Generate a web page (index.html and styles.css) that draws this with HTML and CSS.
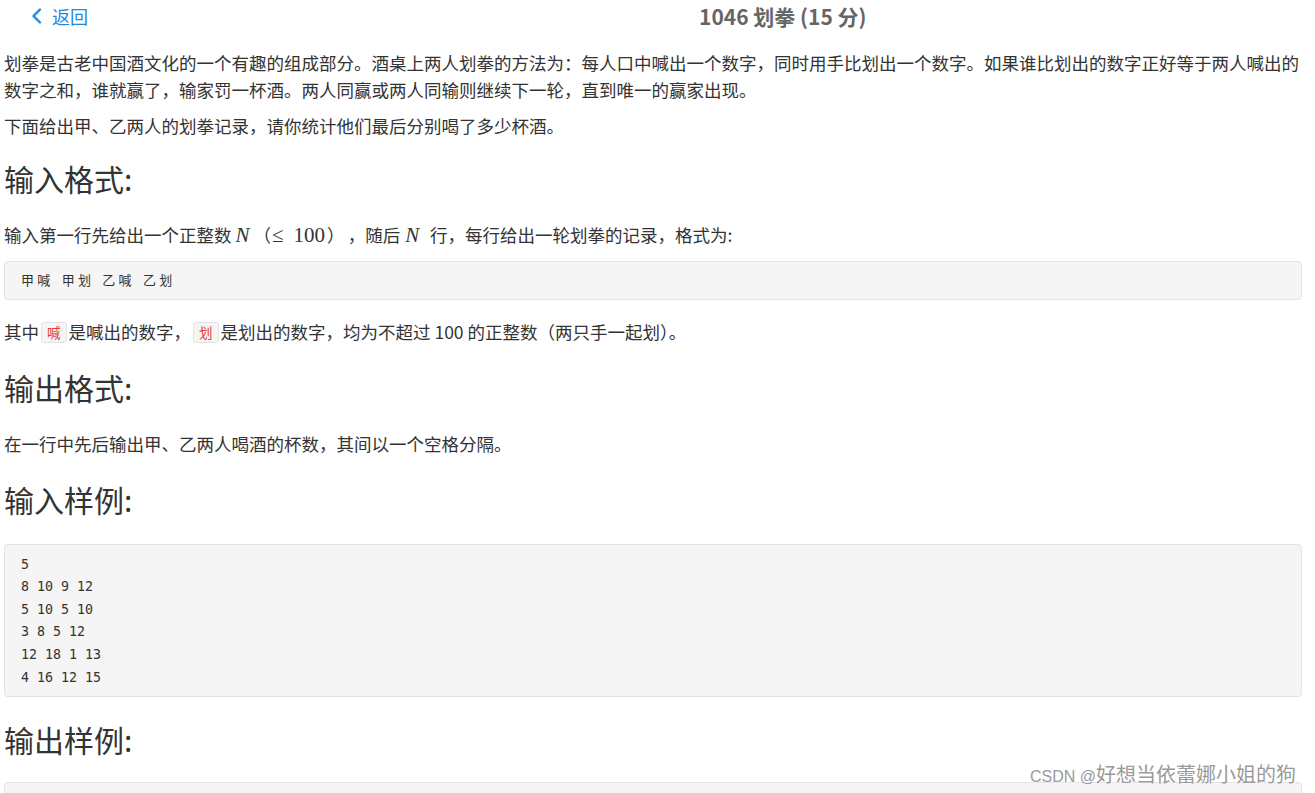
FILE: index.html
```html
<!DOCTYPE html>
<html lang="zh-CN">
<head>
<meta charset="utf-8">
<title>1046 划拳</title>
<link rel="stylesheet" href="styles.css">
</head>
<body>
<header class="topbar">
  <a class="back" href="#">
    <svg class="chev" width="12" height="16" viewBox="0 0 12 16"><path d="M9 1.5 L2.5 8 L9 14.5" fill="none" stroke="#1e88e5" stroke-width="2.4" stroke-linecap="round" stroke-linejoin="round"/></svg>
    <span>返回</span>
  </a>
  <h1 class="title">1046 划拳 (15 分)</h1>
</header>
<main class="content">
  <p>划拳是古老中国酒文化的一个有趣的组成部分。酒桌上两人划拳的方法为：每人口中喊出一个数字，同时用手比划出一个数字。如果谁比划出的数字正好等于两人喊出的数字之和，谁就赢了，输家罚一杯酒。两人同赢或两人同输则继续下一轮，直到唯一的赢家出现。</p>
  <p>下面给出甲、乙两人的划拳记录，请你统计他们最后分别喝了多少杯酒。</p>
  <h2 class="sec first">输入格式:</h2>
  <p>输入第一行先给出一个正整数 <span class="math n1"><i>N</i></span><span class="paren po">（</span><span class="math"><span class="rel">≤</span>100</span><span class="paren pc">）</span>，随后 <span class="math n2"><i>N</i></span> 行，每行给出一轮划拳的记录，格式为:</p>
  <pre class="code"><span class="cjk">甲喊</span> <span class="cjk">甲划</span> <span class="cjk">乙喊</span> <span class="cjk">乙划</span></pre>
  <p>其中<code class="ic">喊</code>是喊出的数字，<code class="ic">划</code>是划出的数字，均为不超过 100 的正整数（两只手一起划）。</p>
  <h2 class="sec">输出格式:</h2>
  <p>在一行中先后输出甲、乙两人喝酒的杯数，其间以一个空格分隔。</p>
  <h2 class="sec">输入样例:</h2>
  <pre class="code sample">5
8 10 9 12
5 10 5 10
3 8 5 12
12 18 1 13
4 16 12 15</pre>
  <h2 class="sec">输出样例:</h2>
  <pre class="code sample last">1 0</pre>
</main>
<div class="watermark"><span class="wm-l">CSDN @</span><span class="wm-c">好想当依蕾娜小姐的狗</span></div>
</body>
</html>
```
FILE: styles.css
```css
html, body {
  margin: 0;
  padding: 0;
  background: #fff;
}
body {
  font-family: "Noto Sans CJK SC", "Microsoft YaHei", sans-serif;
  color: #333;
  font-size: 17.5px;
  overflow: hidden;
}
.topbar {
  display: flex;
  align-items: center;
  height: 32px;
}
.back {
  display: flex;
  align-items: center;
  gap: 9px;
  margin-left: 31px;
  color: #1e88e5;
  text-decoration: none;
  font-size: 18px;
  line-height: 30px;
}
.chev {
  display: block;
}
.title {
  margin: 0 0 0 611px;
  font-size: 21px;
  font-weight: bold;
  color: #666;
  line-height: 32px;
}
.content {
  padding: 17px 13px 0 4px;
}
.content p {
  margin: 0 0 9px;
  line-height: 27px;
}
.sec {
  font-size: 30px;
  font-weight: normal;
  line-height: 36px;
  margin: 24px 0 25px;
  color: #333;
}
.sec.first {
  margin-top: 21px;
}
.math {
  font-family: "Liberation Serif", "Times New Roman", serif;
  font-size: 21px;
}
.n1 {
  margin-right: 2px;
}
.n2 {
  margin: 0 7px 0 1px;
}
.rel {
  margin-right: 10px;
}
.po {
  margin: 0 1px 0 2px;
}
.pc {
  margin: 0 12px 0 2px;
}
.code {
  margin: 12px 0 18px;
  padding: 6.5px 16px;
  background: #f5f5f5;
  border: 1px solid #e3e3e3;
  border-radius: 4px;
  font-family: "DejaVu Sans Mono", "Noto Sans CJK SC", monospace;
  font-size: 13.3px;
  line-height: 22.6px;
  color: #333;
}
.cjk {
  font-family: "Noto Sans CJK SC", sans-serif;
  font-size: 13px;
  letter-spacing: 3.3px;
}
.code.sample {
  margin-top: 27px;
  padding: 9px 16px 7px;
}
.code.sample.last {
  margin-top: 25px;
}
.ic {
  display: inline-block;
  font-family: "Noto Sans CJK SC", sans-serif;
  font-size: 13.5px;
  line-height: 19px;
  padding: 0 5px;
  margin: 0 2px;
  color: #e43d30;
  background: #f5f5f5;
  border: 1px solid #e3e3e3;
  border-radius: 3px;
  vertical-align: 1px;
}
.watermark {
  position: absolute;
  left: 1030px;
  top: 762px;
  color: #9a9a9a;
  text-shadow: 0 0 2px #fff, 0 0 2px #fff;
  white-space: nowrap;
  line-height: 24px;
}
.wm-l {
  font-family: "Liberation Sans", Arial, sans-serif;
  font-size: 16px;
}
.wm-c {
  font-family: "Noto Sans CJK SC", sans-serif;
  font-size: 20px;
}
```
